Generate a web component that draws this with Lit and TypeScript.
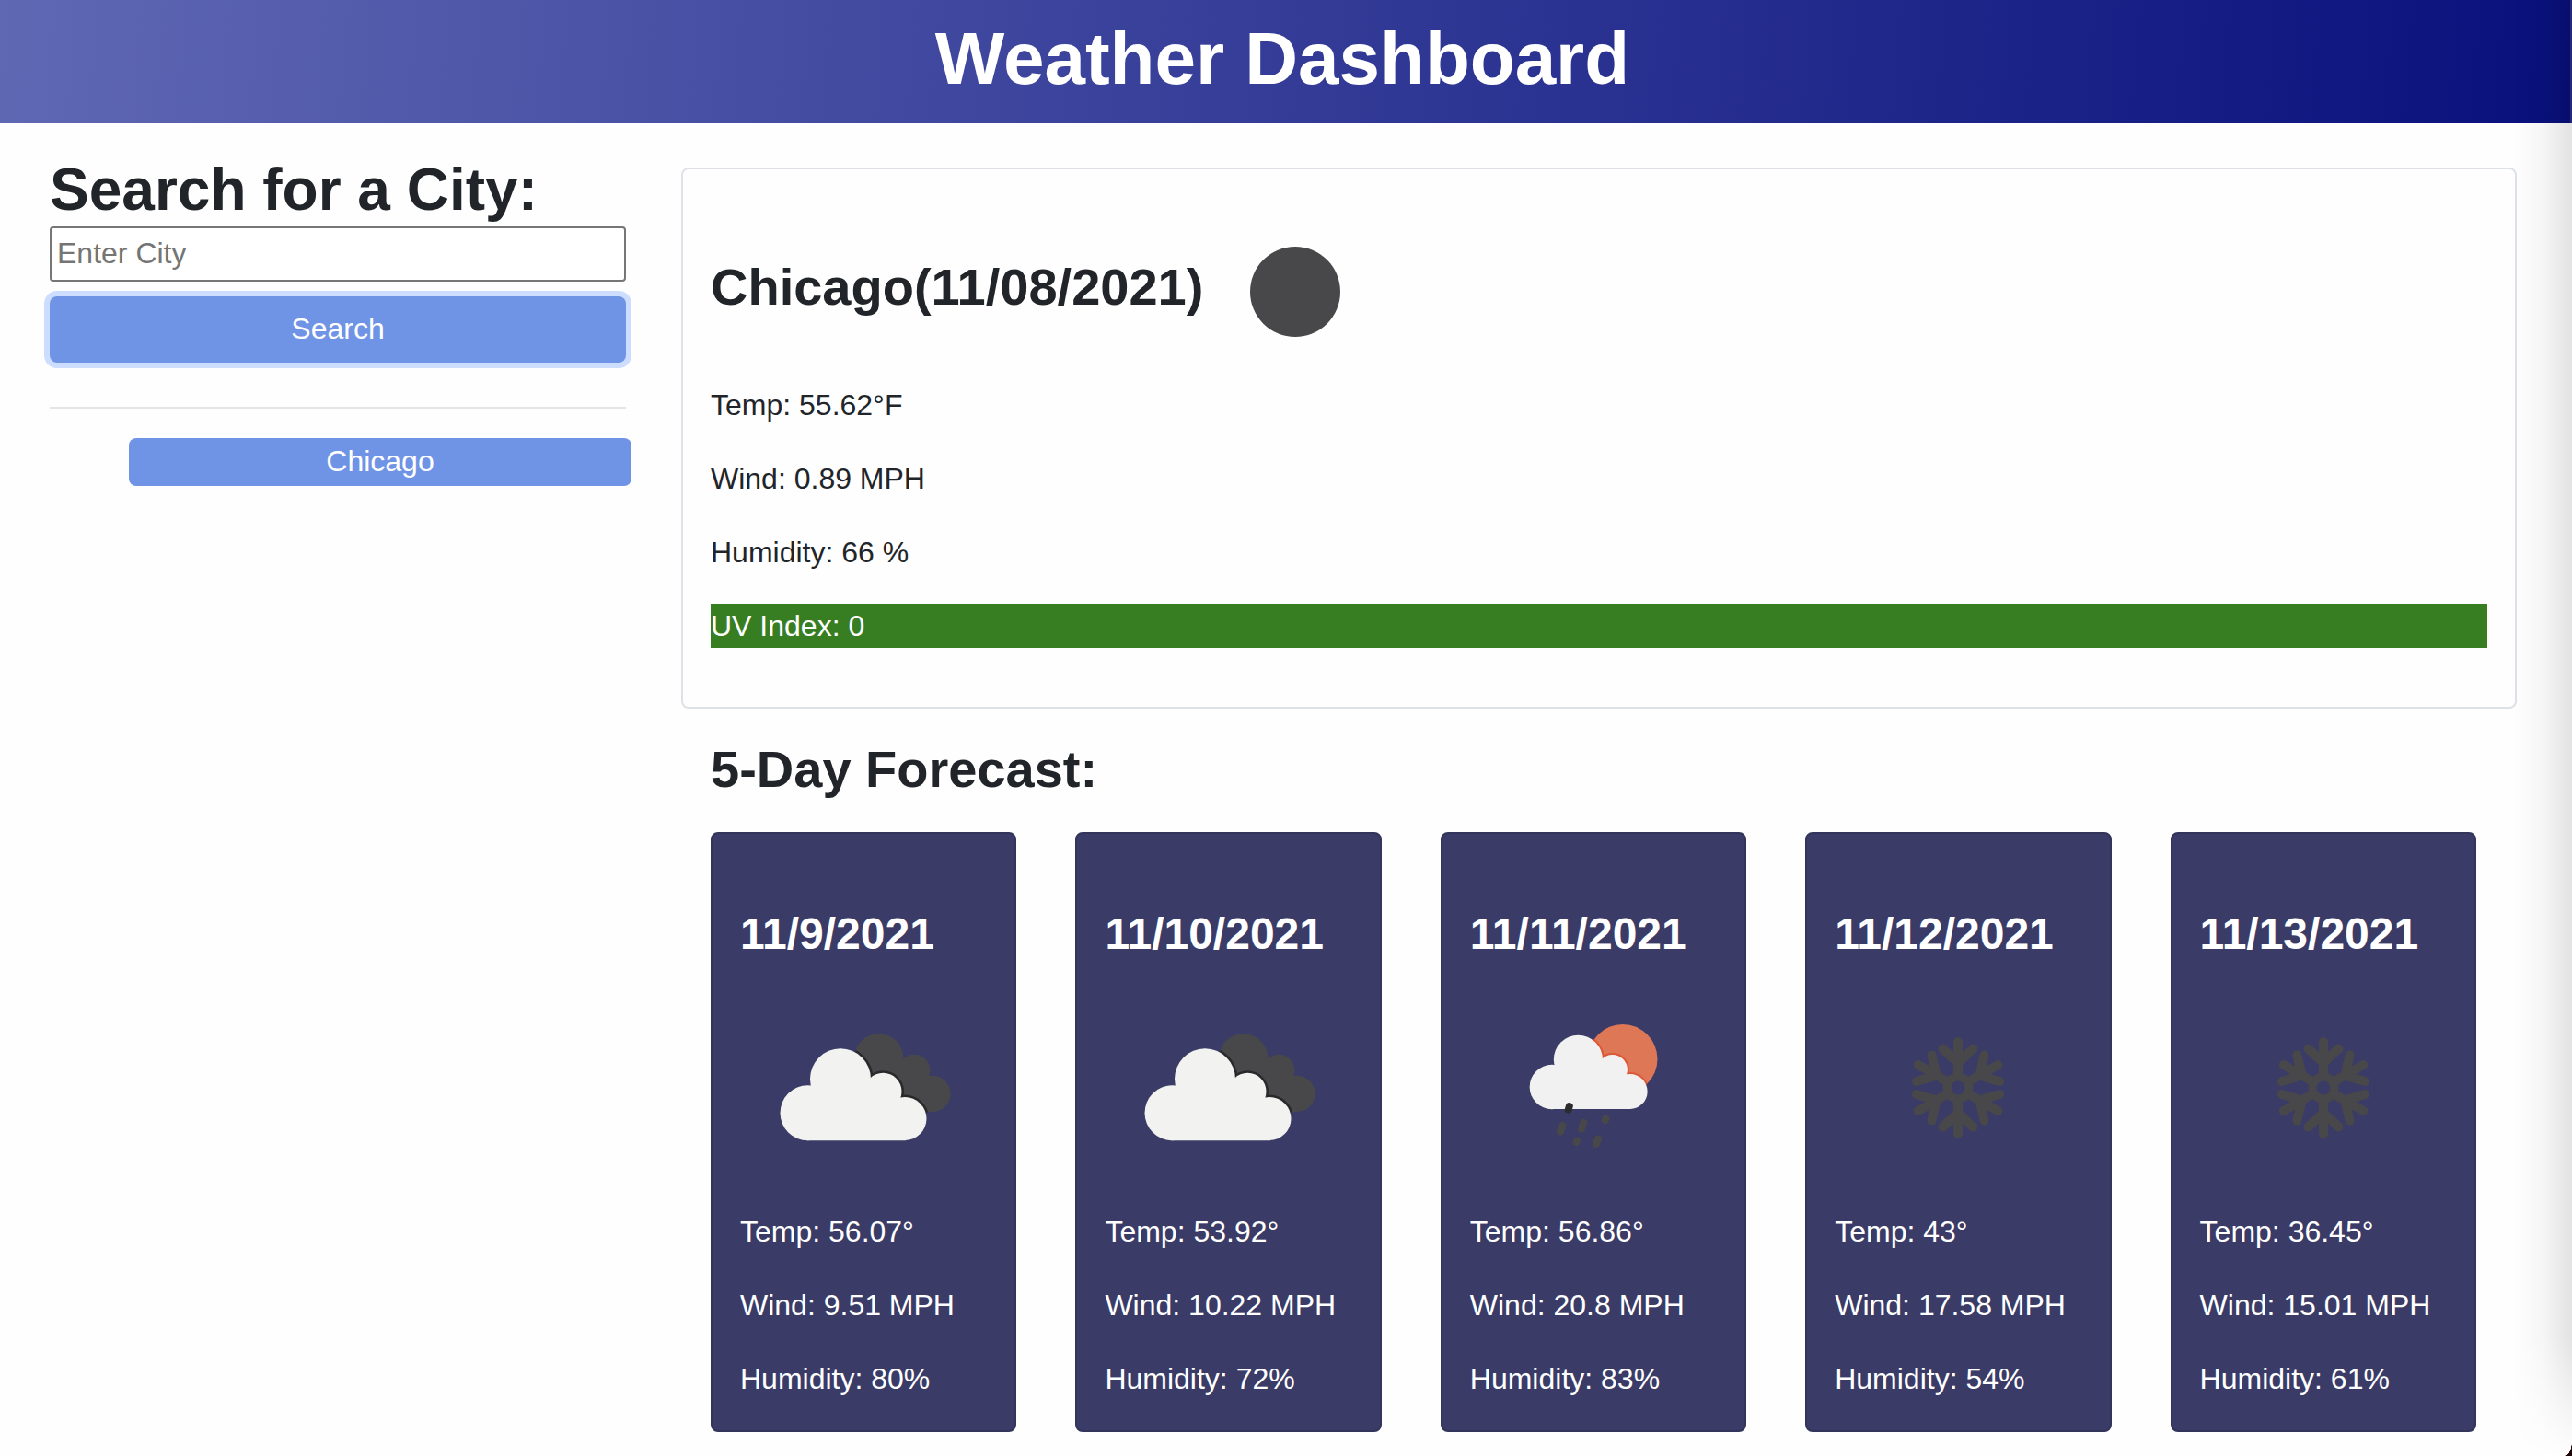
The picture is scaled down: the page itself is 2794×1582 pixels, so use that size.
import { LitElement, html, css, svg, nothing } from "lit";
import { customElement, property } from "lit/decorators.js";

type Sky = "clear-night" | "broken-clouds" | "rain" | "snow";

interface Day {
  date: string;
  sky: Sky;
  temp: string;
  wind: string;
  humidity: string;
}

const forecast: Day[] = [
  { date: "11/9/2021", sky: "broken-clouds", temp: "56.07", wind: "9.51", humidity: "80" },
  { date: "11/10/2021", sky: "broken-clouds", temp: "53.92", wind: "10.22", humidity: "72" },
  { date: "11/11/2021", sky: "rain", temp: "56.86", wind: "20.8", humidity: "83" },
  { date: "11/12/2021", sky: "snow", temp: "43", wind: "17.58", humidity: "54" },
  { date: "11/13/2021", sky: "snow", temp: "36.45", wind: "15.01", humidity: "61" },
];

/* A cloud built from four lobes on a flat base; the rim colour shows only where it crosses what is behind. */
const lobes = svg`
  <circle cx="39.5" cy="127.3" r="30" />
  <circle cx="75" cy="90.300" r="33" />
  <circle cx="121.300" cy="104" r="20.200" />
  <circle cx="145" cy="133.500" r="23.500" />
  <path d="M39 157.200V100L75 90 108 92 140 112 146 157.200Z" />`;

const backLobes = svg`
  <circle cx="116.700" cy="68" r="26.700" />
  <circle cx="155.300" cy="80.700" r="17" />
  <circle cx="175" cy="106.300" r="19.600" />
  <path d="M95 70 135 50 142 72 165 74 175 92 175 126 140 130Z" />`;

const drawings = {
  "clear-night": svg`<circle cx="100" cy="101" r="49" fill="#48484a" />`,
  "broken-clouds": svg`
    <clipPath id="back">
      <circle cx="116.700" cy="68" r="26.700" />
      <circle cx="155.300" cy="80.700" r="17" />
      <circle cx="175" cy="106.300" r="19.600" />
      <path d="M95 70 135 50 142 72 165 74 175 92 175 126 140 130Z" />
    </clipPath>
    <g fill="#48484a" clip-path="url(#back)"><rect width="200" height="200" /></g>
    <g clip-path="url(#back)"><g fill="#29292b" stroke="#29292b" stroke-width="5">${lobes}</g></g>
    <g fill="#f2f2f0">${lobes}</g>`,
  rain: svg`
    <clipPath id="sun"><circle cx="131.800" cy="68.700" r="37.700" /></clipPath>
    <circle cx="131.800" cy="68.700" r="37.700" fill="#dd7756" />
    <g clip-path="url(#sun)">
      <g transform="translate(23 -3.500) scale(0.805)" fill="#dd5736" stroke="#dd5736" stroke-width="5">${lobes}</g>
    </g>
    <g transform="translate(23 -3.500) scale(0.805)" fill="#f1f1f2">${lobes}</g>
    <g stroke="#48484a" stroke-width="8" stroke-linecap="round">
      <path d="M73.800 120 72.800 123.500" stroke="#2c2c2c" />
      <path d="M66.500 141 64 147.500M89.300 137.700 87 144.700M113.500 133.500 112.800 135M82.200 157.500 81.700 159M105 155.500 103 161" />
    </g>`,
  snow: svg`
    <g fill="none" stroke="#48484a" stroke-width="10" stroke-linecap="round">
      <circle cx="100" cy="100" r="12" stroke-width="9" />
      ${[0, 60, 120, 180, 240, 300].map(
        (turn) => svg`<path transform="rotate(${turn} 100 100)" d="M100 86V50M83.500 57.500 100 73 116.500 57.500" />`,
      )}
    </g>`,
};

@customElement("sky-icon")
export class SkyIcon extends LitElement {
  @property() sky: Sky = "clear-night";

  static styles = css`
    :host {
      display: block;
      width: 200px;
      height: 200px;
      flex: none;
    }
    .art {
      display: block;
      width: 100%;
      height: 100%;
      overflow: visible;
    }
  `;

  render() {
    return html`<svg class="art" viewBox="0 0 200 200" aria-hidden="true">${drawings[this.sky] ?? nothing}</svg>`;
  }
}

@customElement("app-root")
export class AppRoot extends LitElement {
  static styles = css`
    :host {
      display: block;
      position: relative;
      min-height: 100vh;
      overflow: hidden;
      background: #fefefe;
      color: #212529;
      font: 32px/48px "Liberation Sans", Arial, sans-serif;
    }
    * {
      box-sizing: border-box;
    }
    h1, h2, h3, p, ul {
      margin: 0;
      padding: 0;
    }
    .banner {
      padding: 16px 6px 22px 0;
      border-right: 2px solid #2c3280;
      background: linear-gradient(95deg, #5f68b3, #09107c);
      color: #fff;
      text-align: center;
    }
    .title {
      font-size: 80px;
      line-height: 96px;
    }
    .layout {
      display: grid;
      grid-template-columns: 626px minmax(0, 1fr);
      gap: 60px;
      padding: 32px 60px 24px 54px;
    }
    .search-title {
      font-size: 64px;
      line-height: 80px;
    }
    .search {
      display: flex;
      flex-direction: column;
    }
    .city {
      height: 60px;
      padding: 0 6px 2px;
      border: 2px solid #767676;
      border-radius: 4px;
      background: #fff;
      font: inherit;
      color: inherit;
    }
    .city::placeholder {
      color: #757575;
      opacity: 1;
    }
    .button {
      border: 0;
      border-radius: 8px;
      background: #6f94e5;
      color: #fff;
      font: inherit;
      text-align: center;
    }
    .submit {
      margin-top: 16px;
      height: 72px;
      padding: 0 0 2px;
      box-shadow: 0 0 0 6px #cdddff;
    }
    .rule {
      margin: 48px 0 32px;
      border: 0;
      border-top: 2px solid #e5e5e5;
    }
    .history {
      list-style: none;
      margin-right: -6px;
      padding-left: 86px;
    }
    .recent {
      display: block;
      width: 100%;
      height: 52px;
      padding: 0 0 2px;
    }
    .today {
      margin-top: 16px;
      padding: 32px 30px 64px;
      border: 2px solid #dee2e6;
      border-radius: 8px;
    }
    .today-head {
      display: flex;
      align-items: center;
    }
    .place {
      padding-bottom: 8px;
      font-size: 56px;
      line-height: 68px;
    }
    .readings {
      display: flex;
      flex-direction: column;
      gap: 32px;
    }
    .uv {
      background: #377e22;
      color: #fff;
    }
    .outlook {
      padding: 32px 44px 0 32px;
    }
    .outlook-title {
      font-size: 56px;
      line-height: 68px;
    }
    .days {
      display: grid;
      grid-template-columns: repeat(5, minmax(0, 1fr));
      gap: 64px;
      margin-top: 34px;
    }
    .day {
      padding: 80px 30px 32px;
      border: 2px solid #333459;
      border-radius: 8px;
      background: #3a3b66;
      color: #fff;
      white-space: nowrap;
    }
    .date {
      font-size: 48px;
      line-height: 58px;
    }
    .day-sky {
      margin: 38px 0 32px 34px;
    }
    .edge {
      position: absolute;
      inset: 0 0 0 auto;
      width: 64px;
      background: linear-gradient(to right, rgba(0, 0, 0, 0), rgba(0, 0, 0, 0.03) 50%, rgba(0, 0, 0, 0.11));
      -webkit-mask-image: linear-gradient(to top, transparent, #000 130px);
      mask-image: linear-gradient(to top, transparent, #000 130px);
      pointer-events: none;
    }
    .corner {
      position: absolute;
      right: 0;
      bottom: 0;
      width: 8px;
      height: 16px;
      background: radial-gradient(ellipse 8px 16px at 0 0, transparent 96%, #1d0508 100%);
      pointer-events: none;
    }
  `;

  render() {
    return html`
      <header class="banner"><h1 class="title">Weather Dashboard</h1></header>
      <main class="layout">
        <aside>
          <form class="search" @submit=${(e: Event) => e.preventDefault()}>
            <h2 class="search-title"><label for="city">Search for a City:</label></h2>
            <input class="city" id="city" type="text" placeholder="Enter City" />
            <button class="button submit" type="submit">Search</button>
          </form>
          <hr class="rule" />
          <ul class="history">
            <li><button class="button recent" type="button">Chicago</button></li>
          </ul>
        </aside>
        <div>
          <section class="today">
            <div class="today-head">
              <h2 class="place">Chicago(11/08/2021)</h2>
              <sky-icon sky="clear-night"></sky-icon>
            </div>
            <div class="readings">
              <p>Temp: 55.62°F</p>
              <p>Wind: 0.89 MPH</p>
              <p>Humidity: 66 %</p>
              <p class="uv">UV Index: 0</p>
            </div>
          </section>
          <section class="outlook">
            <h2 class="outlook-title">5-Day Forecast:</h2>
            <div class="days">
              ${forecast.map(
                (day) => html`<article class="day">
                  <h3 class="date">${day.date}</h3>
                  <sky-icon class="day-sky" sky=${day.sky}></sky-icon>
                  <div class="readings">
                    <p>Temp: ${day.temp}°</p>
                    <p>Wind: ${day.wind} MPH</p>
                    <p>Humidity: ${day.humidity}%</p>
                  </div>
                </article>`,
              )}
            </div>
          </section>
        </div>
      </main>
      <div class="edge"></div>
      <div class="corner"></div>
    `;
  }
}
